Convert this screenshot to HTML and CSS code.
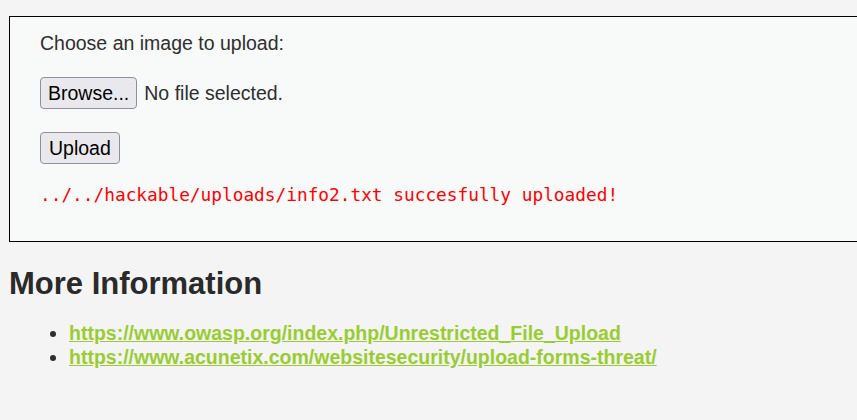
FILE: index.html
```html
<!DOCTYPE html>
<html>
<head>
<meta charset="utf-8">
<link rel="stylesheet" href="styles.css">
</head>
<body>
<div class="page">
  <div class="vulnerable">
    <form class="upload-form">
      <p class="label">Choose an image to upload:</p>
      <div class="file-row">
        <button type="button" class="btn btn-browse">Browse...</button>
        <span class="nofile">No file selected.</span>
      </div>
      <div class="submit-row">
        <button type="button" class="btn">Upload</button>
      </div>
      <pre class="result">../../hackable/uploads/info2.txt succesfully uploaded!</pre>
    </form>
  </div>
  <h2 class="info-title">More Information</h2>
  <ul class="links">
    <li><a href="#">https://www.owasp.org/index.php/Unrestricted_File_Upload</a></li>
    <li><a href="#">https://www.acunetix.com/websitesecurity/upload-forms-threat/</a></li>
  </ul>
</div>
</body>
</html>
```

FILE: styles.css
```css
html, body {
  margin: 0;
  padding: 0;
  background: #f4f4f4;
  overflow: hidden;
}
body {
  font-family: "Liberation Sans", Arial, sans-serif;
  font-size: 19.5px;
  color: #2f2f2f;
}
.page {
  padding: 16px 0 0 9px;
}
.vulnerable {
  border: 1px solid #000;
  background: #f8f9f9;
  margin-right: -10px;
  padding: 15px 0 34px 30px;
}
.upload-form {
  display: flex;
  flex-direction: column;
  align-items: flex-start;
}
.label {
  margin: 0;
  line-height: 22px;
}
.file-row {
  margin-top: 23px;
  display: flex;
  align-items: center;
  gap: 7px;
}
.submit-row {
  margin-top: 23px;
}
.btn {
  font-family: "Liberation Sans", Arial, sans-serif;
  font-size: 19.5px;
  color: #000;
  background: #e9e9ed;
  border: 1px solid #8f8f9d;
  border-radius: 4px;
  height: 32px;
  padding: 0 8px;
  line-height: 30px;
}
.btn-browse {
  padding: 0 7px;
}
.nofile {
  line-height: 22px;
}
.result {
  margin: 19px 0 0;
  font-family: "DejaVu Sans Mono", monospace;
  font-size: 17.8px;
  line-height: 24px;
  color: #ff0000;
}
.info-title {
  margin: 24px 0 0;
  font-size: 31px;
  line-height: 36px;
  font-weight: bold;
  color: #2a2a2a;
}
.links {
  margin: 19px 0 0;
  padding-left: 60px;
  line-height: 24px;
}
.links a {
  color: #99cc33;
  font-weight: bold;
  text-decoration: underline;
}
```
